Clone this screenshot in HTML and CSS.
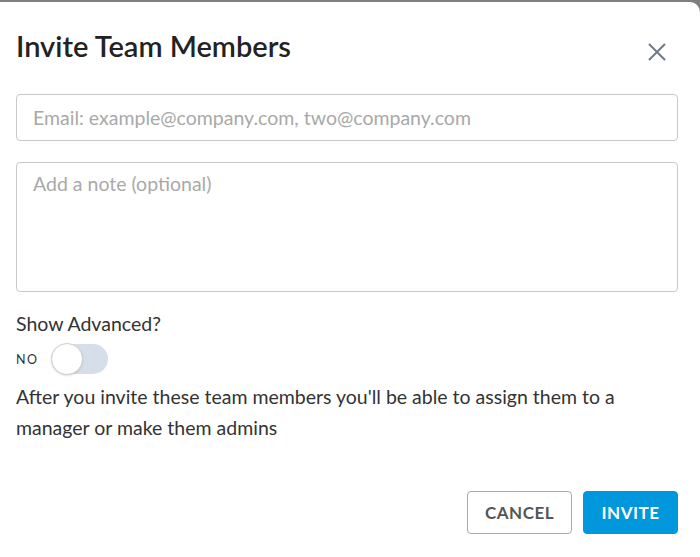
FILE: index.html
```html
<!DOCTYPE html>
<html>
<head>
<meta charset="utf-8">
<link rel="stylesheet" href="styles.css">
</head>
<body>
<div class="dialog">
  <div class="header">
    <h1 class="title">Invite Team Members</h1>
    <button class="close" aria-label="Close">
      <svg width="18" height="18" viewBox="0 0 18 18"><path d="M1.5 1.5 L16.5 16.5 M16.5 1.5 L1.5 16.5" stroke="#6f7a86" stroke-width="2" stroke-linecap="round" fill="none"/></svg>
    </button>
  </div>
  <input class="field email" type="text" placeholder="Email: example@company.com, two@company.com">
  <textarea class="field note" placeholder="Add a note (optional)"></textarea>
  <div class="label">Show Advanced?</div>
  <div class="toggle-row">
    <span class="toggle-text">NO</span>
    <span class="toggle"><span class="knob"></span></span>
  </div>
  <p class="info">After you invite these team members you'll be able to assign them to a manager or make them admins</p>
  <div class="actions">
    <button class="btn cancel">CANCEL</button>
    <button class="btn invite">INVITE</button>
  </div>
</div>
</body>
</html>
```
FILE: styles.css
```css
html, body {
  margin: 0;
  padding: 0;
}
body {
  background: #7f7f7f;
  font-family: Lato, "Open Sans", sans-serif;
  overflow: hidden;
}
.dialog {
  margin-top: 2px;
  height: 555px;
  background: #fff;
  border-top-right-radius: 10px;
  padding: 0 22px 0 16px;
  box-sizing: border-box;
  display: flex;
  flex-direction: column;
}
.header {
  display: flex;
  justify-content: space-between;
  align-items: center;
  height: 92px;
}
.title {
  margin: 0 0 5px 0;
  font-size: 29px;
  font-weight: 600;
  color: #222;
  line-height: 36px;
}
.close {
  border: 0;
  background: none;
  padding: 0;
  margin: 8px 12px 0 0;
  width: 18px;
  height: 18px;
  display: flex;
}
.field {
  display: block;
  width: 100%;
  box-sizing: border-box;
  border: 1px solid #c8c8c8;
  border-radius: 4px;
  font-family: Lato, sans-serif;
  font-size: 19.5px;
  color: #333;
  padding: 0 16px;
  margin: 0;
  outline: none;
}
.field::placeholder {
  color: #a9a9a9;
}
.email {
  height: 47px;
}
.note {
  margin-top: 21px;
  height: 130px;
  padding-top: 9px;
  resize: none;
  line-height: 24px;
}
.label {
  margin-top: 20px;
  font-size: 19.5px;
  color: #333;
  line-height: 24px;
}
.toggle-row {
  margin-top: 8px;
  display: flex;
  align-items: center;
  gap: 12px;
}
.toggle-text {
  font-size: 12.5px;
  letter-spacing: 1.5px;
  color: #333;
}
.toggle {
  width: 57px;
  height: 30px;
  border-radius: 15px;
  background: #d6dee9;
  position: relative;
  display: block;
}
.knob {
  position: absolute;
  left: 0;
  top: -1px;
  width: 30px;
  height: 30px;
  border-radius: 50%;
  background: #fff;
  border: 1px solid #cfcfcf;
  box-shadow: 0 1px 2px rgba(0,0,0,0.12);
}
.info {
  margin: 7px 0 0 0;
  font-size: 19.5px;
  line-height: 31px;
  color: #333;
}
.actions {
  margin-top: auto;
  margin-bottom: 23px;
  display: flex;
  justify-content: flex-end;
  gap: 11px;
}
.btn {
  height: 43px;
  border-radius: 4px;
  font-family: Lato, sans-serif;
  font-size: 17px;
  font-weight: 700;
  letter-spacing: 0.5px;
  cursor: pointer;
}
.cancel {
  width: 105px;
  background: #fff;
  border: 1px solid #a8a8a8;
  color: #555;
}
.invite {
  width: 95px;
  background: #0097dc;
  border: 1px solid #0097dc;
  color: #fff;
}
```
